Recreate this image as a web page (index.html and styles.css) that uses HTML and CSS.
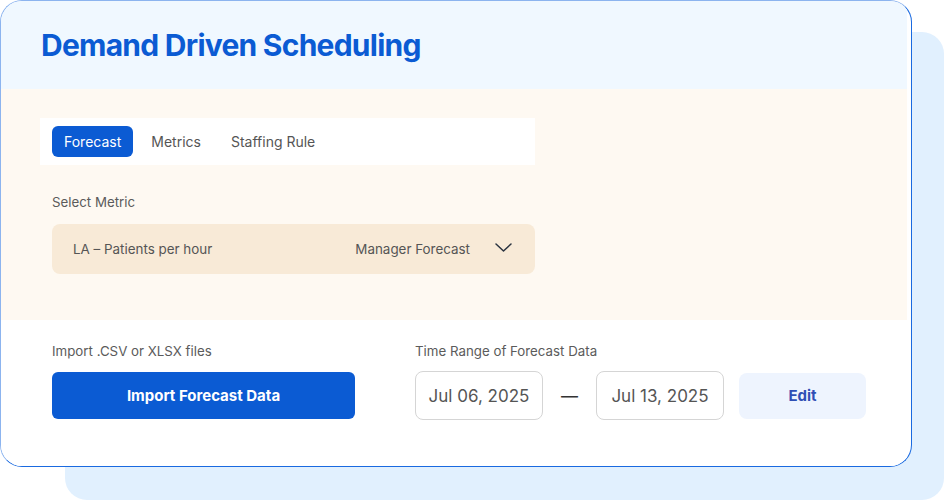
FILE: index.html
```html
<!DOCTYPE html>
<html lang="en">
<head>
<meta charset="utf-8">
<title>Demand Driven Scheduling</title>
<link rel="stylesheet" href="styles.css">
</head>
<body>
<div class="stage">
  <div class="backdrop"></div>
  <div class="card">
    <header class="card-header">
      <h1 class="title">Demand Driven Scheduling</h1>
    </header>
    <section class="metric-section">
      <nav class="tabs">
        <span class="tab tab-active">Forecast</span>
        <span class="tab">Metrics</span>
        <span class="tab">Staffing Rule</span>
      </nav>
      <div class="field-label metric-label">Select Metric</div>
      <div class="select">
        <span class="select-value">LA – Patients per hour</span>
        <span class="select-right">
          <span class="select-source">Manager Forecast</span>
          <svg class="chevron" width="17" height="9" viewBox="0 0 17 9" aria-hidden="true">
            <polyline points="1,1 8.5,8 16,1" fill="none" stroke="#2b3441" stroke-width="1.5" stroke-linecap="round" stroke-linejoin="round"/>
          </svg>
        </span>
      </div>
    </section>
    <section class="import-section">
      <div class="import-col">
        <div class="field-label">Import .CSV or XLSX files</div>
        <button class="btn-primary" type="button">Import Forecast Data</button>
      </div>
      <div class="range-col">
        <div class="field-label">Time Range of Forecast Data</div>
        <div class="range-row">
          <div class="date-box">Jul 06, 2025</div>
          <span class="dash">—</span>
          <div class="date-box">Jul 13, 2025</div>
          <button class="btn-edit" type="button">Edit</button>
        </div>
      </div>
    </section>
  </div>
</div>
</body>
</html>
```

FILE: styles.css
```css
* { box-sizing: border-box; }

html, body {
  margin: 0;
  padding: 0;
  background: #ffffff;
}

body {
  font-family: Inter, "Noto Sans", "Liberation Sans", sans-serif;
  color: #555555;
}

.stage {
  display: grid;
  width: 945px;
  height: 501px;
}

.backdrop,
.card {
  grid-area: 1 / 1;
}

.backdrop {
  margin: 32px 0 0 65px;
  width: 879px;
  height: 468px;
  background: #e1f0fe;
  border-radius: 22px;
}

.card {
  position: relative;
  z-index: 1;
  width: 912px;
  height: 467px;
  background: #ffffff;
  border: 1px solid #1a6ae0;
  border-top-color: #8cb4ef;
  border-left-color: #8cb4ef;
  border-radius: 22px;
  overflow: hidden;
  padding-right: 4px;
  display: flex;
  flex-direction: column;
}

.card-header {
  height: 88px;
  background: #f0f8ff;
  display: flex;
  align-items: center;
  padding-left: 40px;
}

.title {
  margin: 0;
  font-size: 30px;
  font-weight: 700;
  color: #0b5bd3;
  letter-spacing: -0.75px;
}

.metric-section {
  height: 231px;
  background: #fef9f2;
  padding: 29px 0 0 39px;
}

.tabs {
  width: 495px;
  height: 47px;
  background: #ffffff;
  display: flex;
  align-items: center;
  gap: 6px;
  padding-left: 12px;
}

.tab {
  height: 31px;
  padding: 0 12px;
  display: flex;
  align-items: center;
  font-size: 14px;
  color: #555555;
  border-radius: 6px;
}

.tab-active {
  background: #0b5bd3;
  color: #ffffff;
}

.field-label {
  font-size: 13.3px;
  line-height: 16px;
  color: #5b5b5b;
}

.metric-label {
  margin: 29px 0 0 12px;
}

.select {
  margin: 14px 0 0 12px;
  width: 483px;
  height: 50px;
  background: #f8ead7;
  border-radius: 8px;
  display: flex;
  align-items: center;
  justify-content: space-between;
  padding: 0 23px 0 21px;
  font-size: 13.4px;
  color: #555555;
}

.select-right {
  display: flex;
  align-items: center;
  gap: 25px;
}

.chevron {
  display: block;
  margin-top: -3px;
}

.import-section {
  flex: 1;
  background: #ffffff;
  display: flex;
  padding: 23px 0 0 51px;
  gap: 60px;
}

.import-col,
.range-col {
  display: flex;
  flex-direction: column;
}

.btn-primary {
  margin-top: 13px;
  width: 303px;
  height: 47px;
  border: none;
  border-radius: 6px;
  background: #0b5bd3;
  color: #ffffff;
  font-family: inherit;
  font-size: 15px;
  font-weight: 700;
  padding: 0;
}

.range-row {
  margin-top: 12px;
  display: flex;
  align-items: center;
}

.date-box {
  width: 128px;
  height: 49px;
  border: 1px solid #d5d5d5;
  border-radius: 8px;
  display: flex;
  align-items: center;
  justify-content: center;
  font-size: 17px;
  color: #555555;
  background: #ffffff;
}

.dash {
  width: 53px;
  text-align: center;
  font-size: 17px;
  color: #333333;
}

.btn-edit {
  margin-left: 15px;
  width: 127px;
  height: 46px;
  border: none;
  border-radius: 8px;
  background: #eef4fe;
  color: #2f4fb5;
  font-family: inherit;
  font-size: 15px;
  font-weight: 700;
  padding: 0;
}
```
